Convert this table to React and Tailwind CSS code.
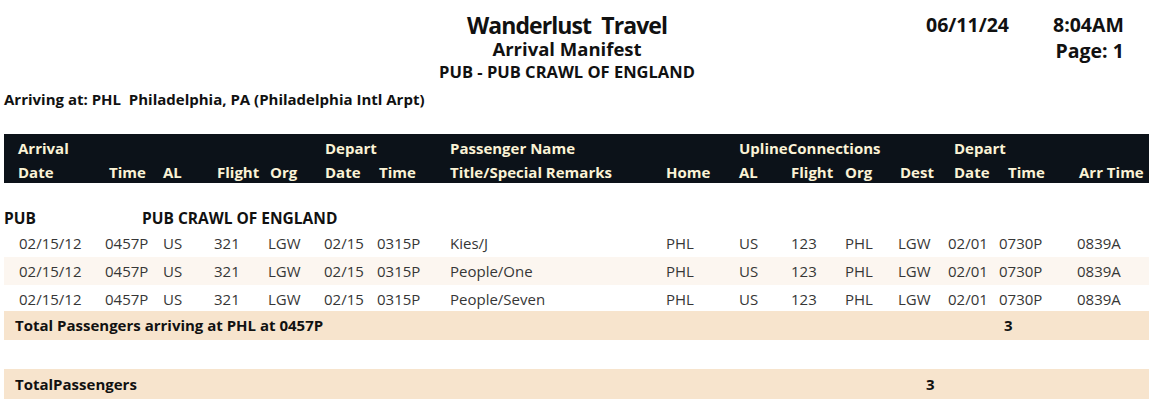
export default function App() {
  const rows = ["Kies/J", "People/One", "People/Seven"];
  const dataCols = "grid grid-cols-[86px_58px_51px_54px_56px_53px_73px_216px_73px_52px_54px_53px_50px_51px_78px_1fr] pl-[15px]";
  const headCols = "grid grid-cols-[91px_54px_54px_53px_55px_54px_71px_216px_73px_52px_54px_55px_54px_54px_71px_1fr] pl-[14px]";

  return (
    <div className="w-[1166px] h-[408px] bg-white text-[#111] font-['Open_Sans',sans-serif] overflow-hidden">
      {/* report heading */}
      <div className="flex pl-[287px] font-bold">
        <div className="w-[560px] flex flex-col items-center pt-[12px]">
          <p className="text-[23px] leading-[26px] tracking-[-0.04em] whitespace-pre">Wanderlust  Travel</p>
          <p className="text-[18.5px] leading-[22px]">Arrival Manifest</p>
          <p className="text-[16.5px] leading-[20px] mt-[2px]">PUB - PUB CRAWL OF ENGLAND</p>
        </div>
        <div className="ml-[79px] pt-[15px] flex text-[19.5px] leading-none">
          <span className="w-[127px]">06/11/24</span>
          <div className="flex flex-col items-end">
            <span>8:04AM</span>
            <span className="mt-[6px]">Page: 1</span>
          </div>
        </div>
      </div>
      <p className="mt-[6px] pl-[4px] font-bold text-[15px] leading-[22px] whitespace-pre">Arriving at: PHL  Philadelphia, PA (Philadelphia Intl Arpt)</p>

      {/* column headings */}
      <div className="mt-[24px] ml-[4px] w-[1145px] h-[49px] bg-[#0c1219] text-[#fbf3d6] font-bold text-[15px] leading-[24px] pt-[2px]">
        <div className={headCols}>
          <span>Arrival</span>
          <span></span>
          <span></span>
          <span></span>
          <span></span>
          <span>Depart</span>
          <span></span>
          <span>Passenger Name</span>
          <span></span>
          <span className="col-span-3">UplineConnections</span>
          <span></span>
          <span>Depart</span>
        </div>
        <div className={headCols}>
          <span>Date</span>
          <span>Time</span>
          <span>AL</span>
          <span>Flight</span>
          <span>Org</span>
          <span>Date</span>
          <span>Time</span>
          <span>Title/Special Remarks</span>
          <span>Home</span>
          <span>AL</span>
          <span>Flight</span>
          <span>Org</span>
          <span>Dest</span>
          <span>Date</span>
          <span>Time</span>
          <span className="whitespace-nowrap">Arr Time</span>
        </div>
      </div>

      {/* group */}
      <div className="mt-[25px] ml-[4px] flex h-[22px] items-center font-bold text-[15.5px]">
        <span className="w-[138px]">PUB</span>
        <span>PUB CRAWL OF ENGLAND</span>
      </div>

      {/* passengers */}
      <div className="-mt-[1px] ml-[4px] w-[1145px] text-[15px] text-[#363636]">
        {rows.map((name, i) => (
          <div
            key={name}
            className={`${dataCols} items-center ${i === 2 ? "h-[26px] pt-[3px]" : "h-[28px]"} ${i === 1 ? "bg-[#fcf6f0]" : ""}`}
          >
            <span>02/15/12</span>
            <span>0457P</span>
            <span>US</span>
            <span>321</span>
            <span>LGW</span>
            <span>02/15</span>
            <span>0315P</span>
            <span>{name}</span>
            <span>PHL</span>
            <span>US</span>
            <span>123</span>
            <span>PHL</span>
            <span>LGW</span>
            <span>02/01</span>
            <span>0730P</span>
            <span>0839A</span>
          </div>
        ))}
      </div>

      {/* totals */}
      <div className="ml-[4px] w-[1145px] h-[29px] bg-[#f7e4cd] flex items-center font-bold text-[15px] pl-[11px]">
        <span className="w-[989px]">Total Passengers arriving at PHL at 0457P</span>
        <span>3</span>
      </div>
      <div className="mt-[29px] ml-[4px] w-[1145px] h-[30px] bg-[#f7e4cd] flex items-center font-bold text-[15px] pl-[11px]">
        <span className="w-[911px]">TotalPassengers</span>
        <span>3</span>
      </div>
    </div>
  );
}
